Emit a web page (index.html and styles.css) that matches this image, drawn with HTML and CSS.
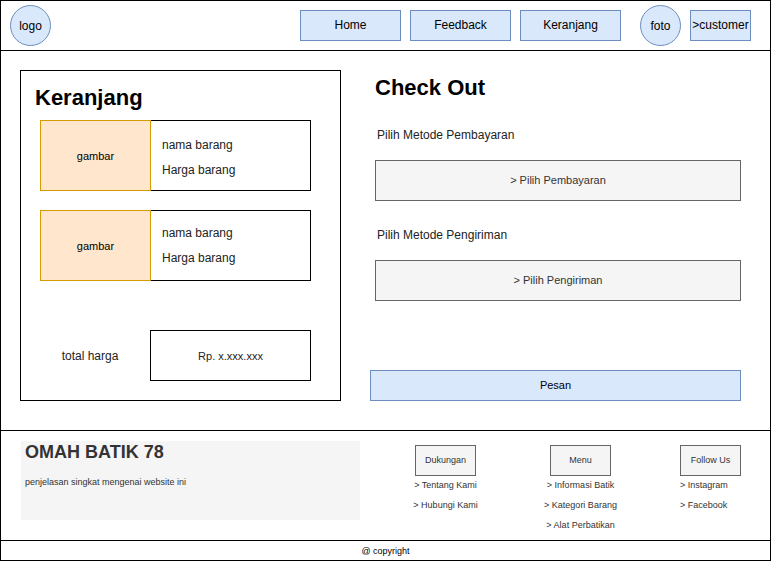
FILE: index.html
```html
<!DOCTYPE html>
<html lang="id">
<head>
    <meta charset="UTF-8">
    <meta name="viewport" content="width=device-width, initial-scale=1.0">
    <title>Keranjang - Omah Batik 78</title>
    <link rel="stylesheet" href="styles.css">
</head>
<body>
<div class="halaman">
    <header class="kepala">
        <div class="bulat">logo</div>
        <nav class="menu">
            <a class="tombol" href="#">Home</a>
            <a class="tombol" href="#">Feedback</a>
            <a class="tombol" href="#">Keranjang</a>
        </nav>
        <div class="bulat foto">foto</div>
        <a class="tombol akun" href="#">&gt;customer</a>
    </header>

    <main class="isi">
        <section class="keranjang">
            <h2 class="judul">Keranjang</h2>
            <div class="barang">
                <div class="gambar">gambar</div>
                <div class="info">
                    <div>nama barang</div>
                    <div>Harga barang</div>
                </div>
            </div>
            <div class="barang barang-dua">
                <div class="gambar">gambar</div>
                <div class="info">
                    <div>nama barang</div>
                    <div>Harga barang</div>
                </div>
            </div>
            <div class="total">
                <div class="total-label">total harga</div>
                <div class="total-nilai">Rp. x.xxx.xxx</div>
            </div>
        </section>

        <section class="checkout">
            <h2 class="judul-checkout">Check Out</h2>
            <div class="label">Pilih Metode Pembayaran</div>
            <div class="pilihan">&gt; Pilih Pembayaran</div>
            <div class="label label-dua">Pilih Metode Pengiriman</div>
            <div class="pilihan">&gt; Pilih Pengiriman</div>
            <button class="pesan">Pesan</button>
        </section>
    </main>

    <footer class="kaki">
        <div class="tentang">
            <h3 class="nama-toko">OMAH BATIK 78</h3>
            <p class="deskripsi">penjelasan singkat mengenai website ini</p>
        </div>
        <div class="kolom kolom-dukungan">
            <div class="kotak">Dukungan</div>
            <div class="tautan">&gt; Tentang Kami</div>
            <div class="tautan">&gt; Hubungi Kami</div>
        </div>
        <div class="kolom kolom-menu">
            <div class="kotak">Menu</div>
            <div class="tautan">&gt; Informasi Batik</div>
            <div class="tautan">&gt; Kategori Barang</div>
            <div class="tautan">&gt; Alat Perbatikan</div>
        </div>
        <div class="kolom kolom-ikuti">
            <div class="kotak">Follow Us</div>
            <div class="tautan kiri">&gt; Instagram</div>
            <div class="tautan kiri">&gt; Facebook</div>
        </div>
    </footer>

    <div class="hak-cipta">@ copyright</div>
</div>
</body>
</html>
```

FILE: styles.css
```css
:root {
  --biru: #dae8fc;
  --biru-garis: #6c8ebf;
  --oranye: #ffe6cc;
  --oranye-garis: #d79b00;
  --abu: #f5f5f5;
  --abu-garis: #666666;
  --teks-abu: #333333;
}

* {
  box-sizing: border-box;
}

body {
  margin: 0;
  font-family: "Liberation Sans", Arial, sans-serif;
  color: #000;
}

.halaman {
  width: 771px;
  height: 561px;
  border: 1px solid #000;
  display: flex;
  flex-direction: column;
}

/* Header */
.kepala {
  height: 50px;
  flex: none;
  border-bottom: 1px solid #000;
  display: flex;
  align-items: center;
  padding: 0 19px 0 9px;
}

.bulat {
  width: 41px;
  height: 41px;
  border-radius: 50%;
  background: var(--biru);
  border: 1px solid var(--biru-garis);
  display: flex;
  align-items: center;
  justify-content: center;
  font-size: 12px;
}

.menu {
  margin-left: auto;
  display: flex;
  gap: 9px;
}

.tombol {
  width: 101px;
  height: 31px;
  background: var(--biru);
  border: 1px solid var(--biru-garis);
  display: flex;
  align-items: center;
  justify-content: center;
  font-size: 12px;
  color: #000;
  text-decoration: none;
  padding-bottom: 1px;
}

.foto {
  margin-left: 19px;
}

.akun {
  width: 61px;
  margin-left: 9px;
}

/* Isi utama */
.isi {
  height: 380px;
  flex: none;
  border-bottom: 1px solid #000;
  display: flex;
  gap: 29px;
  padding: 19px 29px 0 19px;
}

.keranjang {
  width: 321px;
  height: 331px;
  border: 1px solid #000;
  padding: 0 0 0 13px;
}

.judul {
  margin: 16px 0 0 1px;
  font-size: 22px;
  line-height: 22px;
  font-weight: bold;
}

.barang {
  display: flex;
  margin: 11px 0 0 6px;
  height: 71px;
}

.barang-dua {
  margin-top: 19px;
}

.gambar {
  width: 111px;
  background: var(--oranye);
  border: 1px solid var(--oranye-garis);
  display: flex;
  align-items: center;
  justify-content: center;
  font-size: 11px;
}

.info {
  width: 160px;
  border: 1px solid #000;
  border-left: none;
  padding: 12px 0 0 11px;
  font-size: 12px;
  line-height: 25px;
  color: #222;
}

.barang-dua .info {
  padding-top: 10px;
}

.total {
  display: flex;
  align-items: center;
  margin: 49px 0 0 6px;
}

.total-label {
  width: 100px;
  text-align: center;
  font-size: 12px;
  color: #222;
}

.total-nilai {
  margin-left: 10px;
  width: 161px;
  height: 51px;
  border: 1px solid #000;
  display: flex;
  align-items: center;
  justify-content: center;
  font-size: 11px;
  color: #222;
}

/* Check out */
.checkout {
  width: 371px;
  display: flex;
  flex-direction: column;
  height: 331px;
}

.judul-checkout {
  margin: 7px 0 0 5px;
  font-size: 22px;
  line-height: 22px;
  font-weight: bold;
}

.label {
  margin: 29px 0 0 7px;
  font-size: 12px;
  line-height: 14px;
  color: #222;
}

.label-dua {
  margin-top: 27px;
}

.pilihan {
  margin: 18px 0 0 5px;
  width: 366px;
  height: 41px;
  background: var(--abu);
  border: 1px solid var(--abu-garis);
  display: flex;
  align-items: center;
  justify-content: center;
  font-size: 11px;
  color: var(--teks-abu);
  padding-bottom: 1px;
}

.pesan {
  margin-top: auto;
  width: 371px;
  height: 31px;
  background: var(--biru);
  border: 1px solid var(--biru-garis);
  font-family: inherit;
  font-size: 11px;
  color: #000;
  padding: 0 0 2px 0;
}

/* Footer */
.kaki {
  height: 110px;
  flex: none;
  border-bottom: 1px solid #000;
  display: flex;
  padding: 10px 0 0 20px;
  color: var(--teks-abu);
}

.tentang {
  width: 339px;
  height: 79px;
  background: var(--abu);
  padding: 2px 0 0 4px;
}

.nama-toko {
  margin: 0;
  font-size: 18px;
  line-height: 18px;
  font-weight: bold;
}

.deskripsi {
  margin: 16px 0 0 0;
  font-size: 9px;
}

.kolom {
  display: flex;
  flex-direction: column;
  align-items: center;
  width: 61px;
  margin-top: 4px;
}

.kolom-dukungan {
  margin-left: 55px;
}

.kolom-menu {
  margin-left: 74px;
}

.kolom-ikuti {
  margin-left: 69px;
}

.kotak {
  width: 61px;
  height: 31px;
  background: var(--abu);
  border: 1px solid var(--abu-garis);
  display: flex;
  align-items: center;
  justify-content: center;
  font-size: 9px;
  margin-bottom: 4px;
  padding-bottom: 1px;
}

.tautan {
  font-size: 9px;
  line-height: 11px;
  white-space: nowrap;
}

.tautan + .tautan {
  margin-top: 9px;
}

.kiri {
  align-self: flex-start;
}

.hak-cipta {
  flex: 1;
  display: flex;
  align-items: center;
  justify-content: center;
  font-size: 9px;
}
```
